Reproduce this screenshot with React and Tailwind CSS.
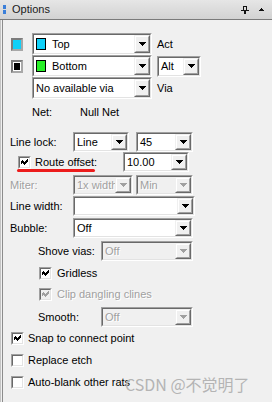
import React from "react";

function Arrow({ disabled }) {
  return (
    <svg width="7" height="4" viewBox="0 0 7 4" className="block" shapeRendering="crispEdges">
      <path d="M0 0h7v1H0zM1 1h5v1H1zM2 2h3v1H2zM3 3h1v1H3z" fill={disabled ? "#a0a0a0" : "#000"} />
    </svg>
  );
}

function Combo({ className = "", children, disabled }) {
  return (
    <div className={`flex shrink-0 border border-t-[#a0a0a0] border-l-[#a0a0a0] border-r-white border-b-white ${className}`}>
      <div
        className={`flex min-w-0 flex-1 border border-t-[#696969] border-l-[#696969] border-r-[#e3e3e3] border-b-[#e3e3e3] ${
          disabled ? "bg-[#f0f0f0]" : "bg-white"
        }`}
      >
        <div
          className={`flex min-w-0 flex-1 items-center overflow-hidden whitespace-nowrap pl-[2px] ${
            disabled ? "text-[#a0a0a0]" : "text-black"
          }`}
        >
          {children}
        </div>
        <div className="flex w-[16px] shrink-0 border border-t-[#f0f0f0] border-l-[#f0f0f0] border-r-[#696969] border-b-[#696969]">
          <div className="flex flex-1 items-center justify-center border border-t-white border-l-white border-r-[#a0a0a0] border-b-[#a0a0a0] bg-[#f0f0f0]">
            <Arrow disabled={disabled} />
          </div>
        </div>
      </div>
    </div>
  );
}

function Check({ checked, disabled }) {
  return (
    <div className="flex h-[13px] w-[13px] shrink-0 border border-t-[#a0a0a0] border-l-[#a0a0a0] border-r-white border-b-white">
      <div
        className={`flex flex-1 items-center justify-center border border-t-[#696969] border-l-[#696969] border-r-[#e3e3e3] border-b-[#e3e3e3] ${
          disabled ? "bg-[#f0f0f0]" : "bg-white"
        }`}
      >
        {checked && (
          <svg width="7" height="7" viewBox="0 0 7 7" className="block" shapeRendering="crispEdges">
            <path
              d="M6 0h1v3H6zM5 1h1v3H5zM4 2h1v3H4zM3 3h1v3H3zM2 2h1v3H2zM1 1h1v3H1zM0 2h1v3H0z"
              fill={disabled ? "#a0a0a0" : "#000"}
            />
          </svg>
        )}
      </div>
    </div>
  );
}

const dis = "text-[#a0a0a0] [text-shadow:1px_1px_0_#ffffff]";

export default function App() {
  return (
    <div className="relative h-[402px] w-[272px] overflow-hidden bg-[#f0f0f0] font-['Liberation_Sans',Arial,sans-serif] text-[11px] leading-[13px] text-black">
      {/* title bar */}
      <div className="flex h-[19px] items-center bg-gradient-to-b from-[#e6e6e6] to-[#d2d2d2]">
        <div className="ml-[3px] flex flex-col gap-[1px]">
          <div className="h-[4px] w-[3px] bg-[#3b7fd9]" />
          <div className="h-[4px] w-[3px] bg-[#3b7fd9]" />
        </div>
        <div className="ml-[6px] text-[11px] text-[#1a1a1a]">Options</div>
        <div className="ml-auto flex items-center">
          <svg width="8" height="8" viewBox="0 0 8 8" className="block" shapeRendering="crispEdges">
            <path d="M2 0h4v1H2zM2 1h1v4H2zM5 1h1v4H5zM0 4h8v1H0zM3 5h2v3H3z" fill="#111" />
          </svg>
          <svg width="5" height="3" viewBox="0 0 5 3" className="ml-[10px] mr-[8px] block" shapeRendering="crispEdges">
            <path d="M2 0h1v1H2zM1 1h3v1H1zM0 2h5v1H0z" fill="#111" />
          </svg>
        </div>
      </div>
      <div className="h-px bg-[#7a7a7a]" />

      {/* body */}
      <div className="h-[382px] border-l border-l-[#c4c4c4] pl-px">
        <div className="h-full border-l border-l-[#8c8c8c] pt-[13px]">
          {/* row 1 */}
          <div className="flex h-[22px] items-center">
            <div className="ml-[8px] h-[13px] w-[12px] border-2 border-t-[#7c7c7c] border-l-[#7c7c7c] border-r-[#a8a8a8] border-b-[#a8a8a8] bg-[#10d0f8]" />
            <Combo className="ml-[9px] h-[22px] w-[120px]">
              <div className="h-[12px] w-[10px] border border-black bg-[#10d0f8]" />
              <span className="ml-[6px]">Top</span>
            </Combo>
            <span className="ml-[5px]">Act</span>
          </div>
          {/* row 2 */}
          <div className="flex h-[22px] items-center">
            <div className="ml-[8px] flex h-[13px] w-[12px] border-2 border-t-[#7c7c7c] border-l-[#7c7c7c] border-r-[#a8a8a8] border-b-[#a8a8a8] bg-white p-px">
              <div className="flex-1 bg-black" />
            </div>
            <Combo className="ml-[9px] h-[22px] w-[120px]">
              <div className="h-[12px] w-[10px] border border-black bg-[#28f028]" />
              <span className="ml-[6px]">Bottom</span>
            </Combo>
            <Combo className="ml-[5px] h-[21px] w-[44px]">
              <span>Alt</span>
            </Combo>
          </div>
          {/* row 3 */}
          <div className="flex h-[22px] items-center">
            <Combo className="ml-[29px] h-[22px] w-[120px]">
              <span>No available via</span>
            </Combo>
            <span className="ml-[5px]">Via</span>
          </div>
          {/* net */}
          <div className="flex h-[26px] items-center">
            <span className="ml-[29px] w-[48px]">Net:</span>
            <span>Null Net</span>
          </div>
          {/* line lock */}
          <div className="mt-[7px] flex h-[20px] items-center">
            <span className="ml-[7px] w-[63px]">Line lock:</span>
            <Combo className="h-[20px] w-[56px]">
              <span>Line</span>
            </Combo>
            <Combo className="ml-[7px] h-[20px] w-[57px]">
              <span>45</span>
            </Combo>
          </div>
          {/* route offset */}
          <div className="relative flex h-[20px] items-center">
            <div className="ml-[15px]">
              <Check checked />
            </div>
            <span className="ml-[4px] w-[88px]">Route offset:</span>
            <Combo className="h-[20px] w-[66px]">
              <span>10.00</span>
            </Combo>
            <div className="absolute left-[14px] top-[17px] h-[3px] w-[78px] rounded-full bg-[#ec1c1c]" />
          </div>
          {/* miter */}
          <div className="mt-[3px] flex h-[20px] items-center">
            <span className={`ml-[7px] w-[63px] ${dis}`}>Miter:</span>
            <Combo disabled className="h-[20px] w-[60px]">
              <span className={dis}>1x width</span>
            </Combo>
            <Combo disabled className="ml-[3px] h-[20px] w-[57px]">
              <span className={dis}>Min</span>
            </Combo>
          </div>
          {/* line width */}
          <div className="mt-px flex h-[20px] items-center">
            <span className="ml-[7px] w-[63px]">Line width:</span>
            <Combo className="h-[20px] w-[122px]">
              <span />
            </Combo>
          </div>
          {/* bubble */}
          <div className="mt-[2px] flex h-[20px] items-center">
            <span className="ml-[7px] w-[63px]">Bubble:</span>
            <Combo className="h-[20px] w-[120px]">
              <span>Off</span>
            </Combo>
          </div>
          {/* shove vias */}
          <div className="mt-[3px] flex h-[20px] items-center">
            <span className="ml-[35px] w-[63px]">Shove vias:</span>
            <Combo disabled className="h-[20px] w-[92px]">
              <span className={dis}>Off</span>
            </Combo>
          </div>
          {/* gridless */}
          <div className="mt-[3px] flex h-[18px] items-center">
            <div className="ml-[36px]">
              <Check checked />
            </div>
            <span className="ml-[5px]">Gridless</span>
          </div>
          {/* clip */}
          <div className="mt-[3px] flex h-[18px] items-center">
            <div className="ml-[36px]">
              <Check checked disabled />
            </div>
            <span className={`ml-[5px] ${dis}`}>Clip dangling clines</span>
          </div>
          {/* smooth */}
          <div className="mt-[4px] flex h-[20px] items-center">
            <span className="ml-[35px] w-[63px]">Smooth:</span>
            <Combo disabled className="h-[20px] w-[92px]">
              <span className={dis}>Off</span>
            </Combo>
          </div>
          {/* snap */}
          <div className="mt-[2px] flex h-[18px] items-center">
            <div className="ml-[8px]">
              <Check checked />
            </div>
            <span className="ml-[4px]">Snap to connect point</span>
          </div>
          <div className="mt-[4px] flex h-[18px] items-center">
            <div className="ml-[8px]">
              <Check />
            </div>
            <span className="ml-[4px]">Replace etch</span>
          </div>
          <div className="mt-[4px] flex h-[18px] items-center">
            <div className="ml-[8px]">
              <Check />
            </div>
            <span className="ml-[4px]">Auto-blank other rats</span>
          </div>
        </div>
      </div>

      {/* watermark */}
      <div className="absolute left-[125px] top-[374px] whitespace-nowrap font-['Noto_Sans_CJK_SC','Noto_Sans',sans-serif] text-[16px] leading-[20px] text-[#b4b4b4]">
        CSDN @不觉明了
      </div>
    </div>
  );
}
